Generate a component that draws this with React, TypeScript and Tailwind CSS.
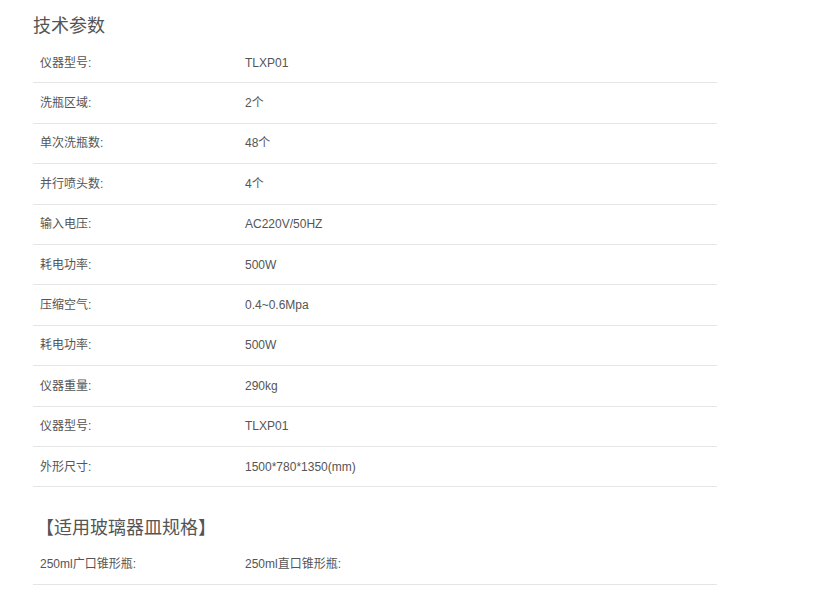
import React from "react";

const rows: [string, string][] = [
  ["仪器型号:", "TLXP01"],
  ["洗瓶区域:", "2个"],
  ["单次洗瓶数:", "48个"],
  ["并行喷头数:", "4个"],
  ["输入电压:", "AC220V/50HZ"],
  ["耗电功率:", "500W"],
  ["压缩空气:", "0.4~0.6Mpa"],
  ["耗电功率:", "500W"],
  ["仪器重量:", "290kg"],
  ["仪器型号:", "TLXP01"],
  ["外形尺寸:", "1500*780*1350(mm)"],
];

function Row({ a, b }: { a: string; b: string }) {
  return (
    <div className="flex h-[40.4px] items-center border-b border-[#e5e5e5] text-[12px] text-[#555]">
      <div className="w-[212px] pl-[7px]">{a}</div>
      <div>{b}</div>
    </div>
  );
}

export default function App() {
  return (
    <div
      className="w-[817px] h-[604px] bg-white overflow-hidden"
      style={{ fontFamily: '"Liberation Sans", "Noto Sans CJK SC", sans-serif' }}
    >
      <div className="ml-[33px] w-[684px] pt-[11px]">
        <h2 className="text-[18px] leading-[30px] text-[#555] h-[32px]">技术参数</h2>
        {rows.map((r, i) => (
          <Row key={i} a={r[0]} b={r[1]} />
        ))}
        <h2 className="mt-[26px] h-[31px] text-[18px] leading-[30px] text-[#555] ml-[3px]">【适用玻璃器皿规格】</h2>
        <Row a="250ml广口锥形瓶:" b="250ml直口锥形瓶:" />
      </div>
    </div>
  );
}
